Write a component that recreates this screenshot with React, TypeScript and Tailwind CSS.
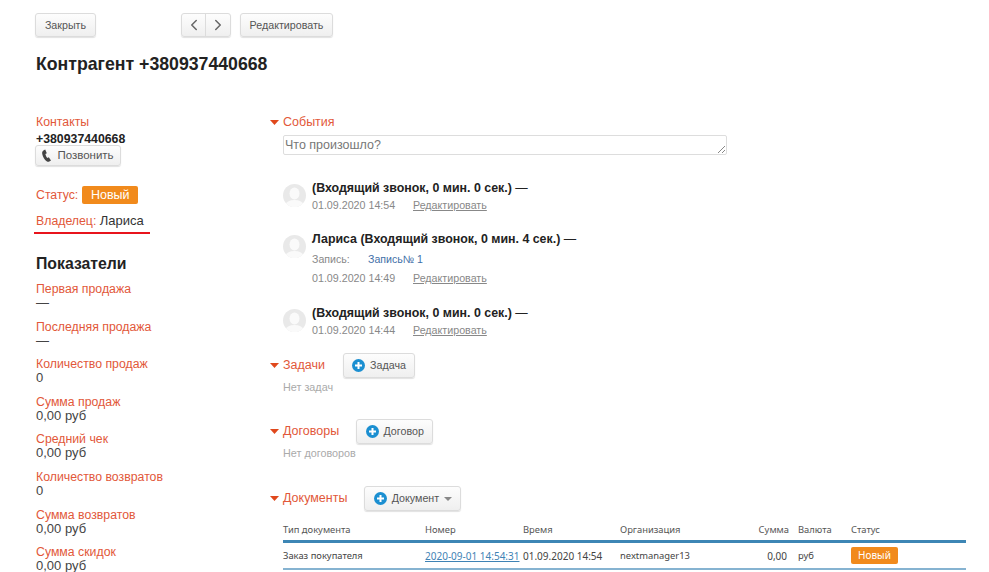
import { ChevronLeft, ChevronRight } from "lucide-react";

const btn =
  "inline-flex items-center justify-center rounded-[3px] border border-[#dcdcdc] bg-gradient-to-b from-[#fdfdfd] to-[#efefef] text-[10.7px] text-[#555] shadow-[0_1px_1px_rgba(0,0,0,0.12)]";

const metrics = [
  ["Первая продажа", "—"],
  ["Последняя продажа", "—"],
  ["Количество продаж", "0"],
  ["Сумма продаж", "0,00 руб"],
  ["Средний чек", "0,00 руб"],
  ["Количество возвратов", "0"],
  ["Сумма возвратов", "0,00 руб"],
  ["Сумма скидок", "0,00 руб"],
];

function Triangle() {
  return (
    <svg width="9" height="5" viewBox="0 0 9 5" className="mr-1 shrink-0">
      <path d="M0 0h9L4.5 5z" fill="#e0481c" />
    </svg>
  );
}

function PlusIcon() {
  return (
    <svg width="13" height="13" viewBox="0 0 13 13" className="mr-[5px] shrink-0">
      <circle cx="6.5" cy="6.5" r="6.5" fill="#1b8fd1" />
      <path d="M6.5 3v7M3 6.5h7" stroke="#fff" strokeWidth="2" />
    </svg>
  );
}

function PhoneIcon() {
  return (
    <svg width="10" height="13" viewBox="0 0 10 13" className="mr-[5px] shrink-0">
      <path
        d="M3.2.6 1.4 1.5C.2 2.2 0 3.6.3 5.2c.5 2.6 2.3 5.6 4.3 7 .9.6 1.9.8 2.7.3l1.7-1-2.2-3.2-1.4.7C4.5 8.2 3.6 6.3 3.4 5l1.4-.8z"
        fill="#444"
      />
    </svg>
  );
}

function Avatar() {
  return (
    <svg width="23" height="23" viewBox="0 0 23 23" className="mt-[3px] shrink-0">
      <defs>
        <clipPath id="av">
          <circle cx="11.5" cy="11.5" r="11.5" />
        </clipPath>
      </defs>
      <g clipPath="url(#av)">
        <rect width="23" height="23" fill="#e9e9e9" />
        <ellipse cx="11.5" cy="9.5" rx="5" ry="6" fill="#fafafa" />
        <ellipse cx="11.5" cy="21" rx="9" ry="5" fill="#fafafa" />
      </g>
    </svg>
  );
}

function SectionHead({ title, children }: { title: string; children?: React.ReactNode }) {
  return (
    <div className="flex items-center">
      <Triangle />
      <span className="text-[12.5px] leading-[15px] text-[#e2583a]">{title}</span>
      {children}
    </div>
  );
}

function EventRow({
  author,
  text,
  date,
  record,
}: {
  author?: string;
  text: string;
  date: string;
  record?: boolean;
}) {
  return (
    <div className="flex gap-[6px]">
      <Avatar />
      <div>
        <div className="text-[12.4px] leading-[15px] font-bold text-[#222]">
          {author ? author + " " : ""}
          {text} <span className="font-normal">—</span>
        </div>
        {record && (
          <div className="mt-[5px] flex text-[10.6px] leading-[14px] text-[#888]">
            <span className="w-[56px]">Запись:</span>
            <span className="text-[#3f6fa8]">Запись№ 1</span>
          </div>
        )}
        <div className={"flex text-[10.7px] leading-[14px] text-[#888] " + (record ? "mt-[5px]" : "mt-[2px]")}>
          <span className="w-[101px]">{date}</span>
          <span className="underline">Редактировать</span>
        </div>
      </div>
    </div>
  );
}

export default function App() {
  return (
    <div className="h-[572px] overflow-hidden bg-white pl-[35px] pt-[13px] font-['Liberation_Sans',Arial,sans-serif]">
      <div className="flex items-center">
        <button className={btn + " h-[24px] w-[61px]"}>Закрыть</button>
        <div className="ml-[85px] flex h-[24px] w-[50px] rounded-[3px] border border-[#dcdcdc] bg-gradient-to-b from-[#fdfdfd] to-[#efefef] shadow-[0_1px_1px_rgba(0,0,0,0.12)]">
          <span className="flex w-1/2 items-center justify-center border-r border-[#dcdcdc] text-[#666]">
            <ChevronLeft size={18} strokeWidth={2} />
          </span>
          <span className="flex w-1/2 items-center justify-center text-[#666]">
            <ChevronRight size={18} strokeWidth={2} />
          </span>
        </div>
        <button className={btn + " ml-[9px] h-[24px] w-[93px]"}>Редактировать</button>
      </div>

      <h1 className="ml-[1px] mt-[16px] text-[17.7px] leading-[22px] font-bold text-[#222]">Контрагент +380937440668</h1>

      <div className="mt-[40px] flex">
        <aside className="w-[235px] shrink-0 text-[12.3px] leading-[15px]">
          <div className="ml-[1px] text-[#e2583a]">Контакты</div>
          <div className="ml-[1px] mt-[2px] font-bold text-[#222]">+380937440668</div>
          <button className={btn + " -mt-[2px] h-[21px] w-[86px] text-[11.5px]"}>
            <PhoneIcon />
            Позвонить
          </button>
          <div className="ml-[1px] mt-[20px] flex items-center">
            <span className="text-[#e2583a]">Статус:</span>
            <span className="ml-[4px] flex h-[18px] w-[56px] items-center justify-center rounded-[2px] bg-[#f18a1c] text-[12.5px] text-[#fff]">
              Новый
            </span>
          </div>
          <div className="-ml-[1px] mt-[9px] w-[116px] border-b-2 border-[#e8141c] pb-[3px] pl-[2px] text-[#333]">
            <span className="text-[#e2583a]">Владелец:</span> <span className="text-[13px]">Лариса</span>
          </div>
          <h2 className="ml-[1px] mt-[20px] text-[15.8px] leading-[20px] font-bold text-[#222]">Показатели</h2>
          <div className="ml-[1px] mt-[8px]">
            {metrics.map(([label, value]) => (
              <div key={label} className="mb-[9.6px]">
                <div className="text-[#e2583a]">{label}</div>
                <div className="-mt-[1px] text-[13px] leading-[14px] text-[#444]">{value}</div>
              </div>
            ))}
          </div>
        </aside>

        <main className="w-[696px]">
          <SectionHead title="События" />
          <div className="relative ml-[13px] mt-[5px] h-[20px] w-[444px] rounded-[2px] border border-[#ddd] pl-[1px] pt-[1px] text-[12.5px] leading-[17px] text-[#777]">
            Что произошло?
            <svg width="8" height="8" viewBox="0 0 8 8" className="absolute right-[1px] bottom-[1px]">
              <path d="M1 8 8 1M5 8l3-3" stroke="#888" strokeWidth="1" />
            </svg>
          </div>
          <div className="ml-[13px] mt-[26px] flex flex-col">
            <EventRow text="(Входящий звонок, 0 мин. 0 сек.)" date="01.09.2020 14:54" />
            <div className="mt-[20px]">
              <EventRow author="Лариса" text="(Входящий звонок, 0 мин. 4 сек.)" date="01.09.2020 14:49" record />
            </div>
            <div className="mt-[21px]">
              <EventRow text="(Входящий звонок, 0 мин. 0 сек.)" date="01.09.2020 14:44" />
            </div>
          </div>

          <div className="mt-[16px]">
            <SectionHead title="Задачи">
              <button className={btn + " ml-[18px] h-[25px] w-[72px]"}>
                <PlusIcon />
                Задача
              </button>
            </SectionHead>
            <div className="ml-[13px] mt-[2px] text-[10.8px] leading-[14px] text-[#aaa]">Нет задач</div>
          </div>

          <div className="mt-[25px]">
            <SectionHead title="Договоры">
              <button className={btn + " ml-[17px] h-[25px] w-[77px]"}>
                <PlusIcon />
                Договор
              </button>
            </SectionHead>
            <div className="ml-[13px] mt-[2px] text-[10.8px] leading-[14px] text-[#aaa]">Нет договоров</div>
          </div>

          <div className="mt-[26px]">
            <SectionHead title="Документы">
              <button className={btn + " ml-[17px] h-[25px] w-[97px]"}>
                <PlusIcon />
                Документ
                <svg width="8" height="4" viewBox="0 0 8 4" className="ml-[5px]">
                  <path d="M0 0h8L4 4z" fill="#888" />
                </svg>
              </button>
            </SectionHead>
            <table className="ml-[13px] mt-[10px] w-[683px] table-fixed border-b-2 border-[#86b3d1] font-['Noto_Sans',sans-serif] text-[9.4px] text-[#444]">
              <thead>
                <tr className="h-[20px] border-b-[3px] border-[#3d86b5] text-left text-[#555]">
                  <th className="w-[142px] font-normal">Тип документа</th>
                  <th className="w-[98px] font-normal">Номер</th>
                  <th className="w-[97px] font-normal">Время</th>
                  <th className="w-[120px] font-normal">Организация</th>
                  <th className="w-[58px] pr-[9px] text-right font-normal">Сумма</th>
                  <th className="w-[53px] font-normal">Валюта</th>
                  <th className="font-normal">Статус</th>
                </tr>
              </thead>
              <tbody>
                <tr className="h-[28px]">
                  <td className="pt-[2px]">Заказ покупателя</td>
                  <td className="pt-[2px] text-[10px] text-[#3f83b5] underline">2020-09-01 14:54:31</td>
                  <td className="pt-[2px] text-[10px]">01.09.2020 14:54</td>
                  <td className="pt-[2px]">nextmanager13</td>
                  <td className="pt-[2px] pr-[11px] text-right text-[10px]">0,00</td>
                  <td className="pt-[2px]">руб</td>
                  <td className="pt-[1px]">
                    <span className="flex h-[17px] w-[47px] items-center justify-center rounded-[2px] bg-[#f18a1c] text-[10px] text-white">
                      Новый
                    </span>
                  </td>
                </tr>
              </tbody>
            </table>
          </div>
        </main>
      </div>
    </div>
  );
}
